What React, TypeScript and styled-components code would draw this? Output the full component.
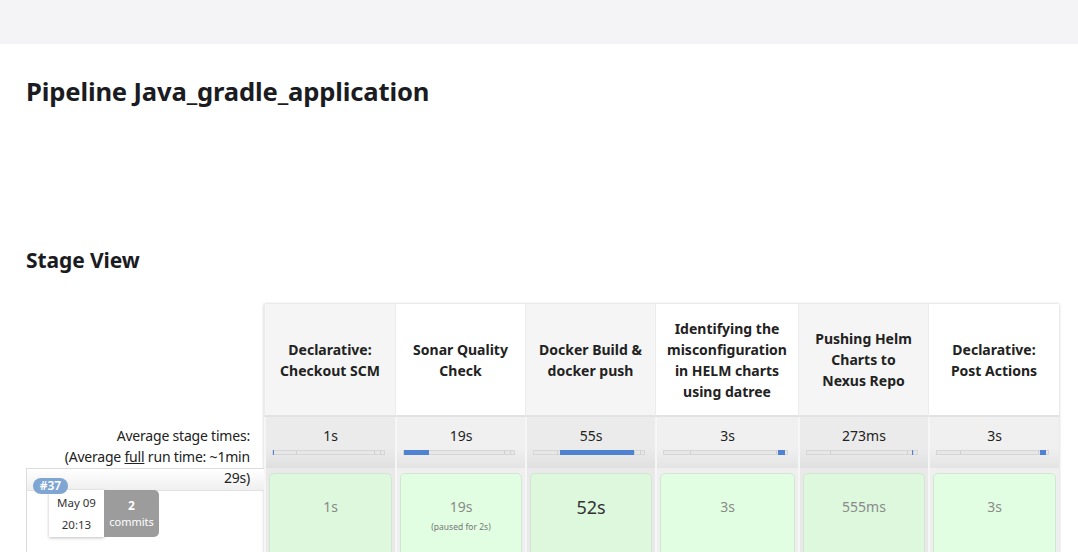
import React from "react";
import styled, { createGlobalStyle } from "styled-components";

const Global = createGlobalStyle`
  html, body { margin: 0; padding: 0; background: #fff; }
  body { font-family: "Noto Sans", "Open Sans", sans-serif; color: #1b1b22; overflow: hidden; }
`;

const TopBar = styled.div`
  height: 44px;
  background: #f4f4f6;
`;

const Content = styled.div`
  padding: 0 0 0 26px;
`;

const Title = styled.h1`
  margin: 0;
  padding-top: 33px;
  height: 140px;
  box-sizing: border-box;
  font-size: 25.6px;
  font-weight: 700;
  line-height: 30px;
  letter-spacing: -0.15px;
  color: #1b1b22;
`;

const SectionTitle = styled.h2`
  margin: 0;
  padding-top: 63px;
  font-size: 21px;
  font-weight: 700;
  line-height: 26px;
  letter-spacing: -0.1px;
  color: #1b1b22;
`;

const StageView = styled.div`
  margin-top: 31px;
  display: flex;
  align-items: flex-start;
`;

const LeftCol = styled.div`
  width: 238px;
  display: flex;
  flex-direction: column;
`;

const HeaderSpacer = styled.div`
  height: 113px;
`;

const AvgLabel = styled.div`
  height: 51px;
  box-sizing: border-box;
  padding: 8px 14px 0 0;
  text-align: right;
  font-size: 14px;
  line-height: 21px;
  letter-spacing: -0.2px;
  color: #222;
  position: relative;
  z-index: 2;
  white-space: nowrap;
  u { text-decoration: underline; }
`;

const BuildCell = styled.div`
  height: 90px;
  border-top: 1px solid #dcdcdc;
  border-left: 1px solid #dcdcdc;
  position: relative;
`;

const BuildStripe = styled.div`
  height: 21px;
  background: linear-gradient(#ffffff, #efefef);
  border-bottom: 1px solid #e2e2e2;
`;

const Badge = styled.div`
  position: absolute;
  left: 6px;
  top: 9px;
  width: 35px;
  height: 16px;
  border-radius: 8px;
  background: #7fa6d2;
  color: #fff;
  font-size: 12px;
  font-weight: 600;
  line-height: 16px;
  text-align: center;
  z-index: 3;
`;

const BuildInfo = styled.div`
  position: absolute;
  left: 22px;
  top: 21px;
  display: flex;
  height: 47px;
`;

const DateBox = styled.div`
  width: 55px;
  background: #fff;
  box-shadow: 0 1px 3px rgba(0, 0, 0, 0.25);
  display: flex;
  flex-direction: column;
  align-items: center;
  justify-content: center;
  gap: 5px;
  font-size: 11.5px;
  line-height: 17px;
  color: #333;
`;

const CommitsBox = styled.div`
  width: 55px;
  background: #9c9c9c;
  border-radius: 0 5px 5px 0;
  display: flex;
  flex-direction: column;
  align-items: center;
  justify-content: center;
  color: #fff;
  font-size: 11px;
  line-height: 16px;
  b { font-weight: 700; font-size: 12px; }
`;

const Table = styled.div`
  display: grid;
  grid-template-columns: 131px 130px 130px 143px 130px 131px;
  grid-template-rows: 113px 51px 90px;
  box-shadow: 0 0 3px rgba(0, 0, 0, 0.22);
`;

const HeadCell = styled.div<{ $alt: boolean }>`
  background: ${(p) => (p.$alt ? "#f5f5f5" : "#ffffff")};
  border-left: 1px solid #ececec;
  border-bottom: 2px solid #e2e2e2;
  display: flex;
  align-items: center;
  justify-content: center;
  text-align: center;
  padding: 0 6px;
  box-sizing: border-box;
  font-size: 14px;
  font-weight: 700;
  line-height: 21px;
  color: #222;
`;

const HeadText = styled.span<{ $max: number }>`
  max-width: ${(p) => p.$max}px;
`;

const AvgCell = styled.div<{ $alt: boolean }>`
  background: ${(p) =>
    p.$alt
      ? "linear-gradient(#ebebeb 0%, #ebebeb 60%, #e0e0e0 100%)"
      : "linear-gradient(#f0f0f0 0%, #f0f0f0 60%, #e4e4e4 100%)"};
  border-left: 2px solid #f6f6f6;
  display: flex;
  flex-direction: column;
  align-items: stretch;
  font-size: 14px;
  color: #222;
  box-sizing: border-box;
`;

const AvgTime = styled.div`
  text-align: center;
  line-height: 20px;
  padding-top: 9px;
`;

const Track = styled.div`
  margin: 4px 10px 0 6px;
  height: 5px;
  background: #e7e7e7;
  border: 1px solid #d6d6d6;
  box-sizing: border-box;
  position: relative;
`;

const Tick = styled.div<{ $at: number }>`
  position: absolute;
  top: 0;
  bottom: 0;
  width: 1px;
  left: ${(p) => p.$at}%;
  background: #cfcfcf;
`;

const Fill = styled.div`
  position: absolute;
  top: -1px;
  bottom: -1px;
  background: #4f83d2;
`;

const BuildRowCell = styled.div<{ $alt: boolean }>`
  background: ${(p) => (p.$alt ? "#e9e9e9" : "#efefef")};
  border-left: 2px solid #f6f6f6;
  padding: 5px 3px 0 3px;
  box-sizing: border-box;
`;

const StageBox = styled.div<{ $alt: boolean }>`
  height: 100%;
  background: ${(p) => (p.$alt ? "#ddf8dd" : "#e2fee2")};
  border: 1px solid #d3e6d3;
  border-radius: 5px;
  box-sizing: border-box;
  display: flex;
  flex-direction: column;
  align-items: center;
  padding-top: 22px;
`;

const StageTime = styled.div<{ $big: boolean }>`
  font-size: ${(p) => (p.$big ? "18px" : "14px")};
  line-height: 22px;
  color: ${(p) => (p.$big ? "#333" : "#8a8a8a")};
`;

const Paused = styled.div`
  font-size: 8.5px;
  color: #777;
  margin-top: 3px;
`;

type Stage = {
  name: string;
  avg: string;
  fill: { left: string; width: string };
  time: string;
  big?: boolean;
  paused?: string;
  max: number;
};

const stages: Stage[] = [
  { name: "Declarative: Checkout SCM", avg: "1s", fill: { left: "0", width: "1px" }, time: "1s", max: 110 },
  { name: "Sonar Quality Check", avg: "19s", fill: { left: "0", width: "23%" }, time: "19s", paused: "(paused for 2s)", max: 100 },
  { name: "Docker Build & docker push", avg: "55s", fill: { left: "23.5%", width: "67%" }, time: "52s", big: true, max: 118 },
  { name: "Identifying the misconfiguration in HELM charts using datree", avg: "3s", fill: { left: "93%", width: "5.5%" }, time: "3s", max: 124 },
  { name: "Pushing Helm Charts to Nexus Repo", avg: "273ms", fill: { left: "95%", width: "1px" }, time: "555ms", max: 100 },
  { name: "Declarative: Post Actions", avg: "3s", fill: { left: "93%", width: "5%" }, time: "3s", max: 100 },
];

export default function App() {
  return (
    <>
      <Global />
      <TopBar />
      <Content>
        <Title>Pipeline Java_gradle_application</Title>
        <SectionTitle>Stage View</SectionTitle>
        <StageView>
          <LeftCol>
            <HeaderSpacer />
            <AvgLabel>
              Average stage times:
              <br />
              (Average <u>full</u> run time: ~1min
              <br />
              29s)
            </AvgLabel>
            <BuildCell>
              <BuildStripe />
              <Badge>#37</Badge>
              <BuildInfo>
                <DateBox>
                  <span>May 09</span>
                  <span>20:13</span>
                </DateBox>
                <CommitsBox>
                  <b>2</b>
                  <span>commits</span>
                </CommitsBox>
              </BuildInfo>
            </BuildCell>
          </LeftCol>
          <Table>
            {stages.map((s, i) => (
              <HeadCell key={"h" + i} $alt={i % 2 === 0}>
                <HeadText $max={s.max}>{s.name}</HeadText>
              </HeadCell>
            ))}
            {stages.map((s, i) => (
              <AvgCell key={"a" + i} $alt={i % 2 === 0}>
                <AvgTime>{s.avg}</AvgTime>
                <Track>
                  <Tick $at={21} />
                  <Tick $at={91} />
                  <Tick $at={96} />
                  <Fill style={{ left: s.fill.left, width: s.fill.width }} />
                </Track>
              </AvgCell>
            ))}
            {stages.map((s, i) => (
              <BuildRowCell key={"b" + i} $alt={i % 2 === 0}>
                <StageBox $alt={i % 2 === 0}>
                  <StageTime $big={!!s.big}>{s.time}</StageTime>
                  {s.paused && <Paused>{s.paused}</Paused>}
                </StageBox>
              </BuildRowCell>
            ))}
          </Table>
        </StageView>
      </Content>
    </>
  );
}
